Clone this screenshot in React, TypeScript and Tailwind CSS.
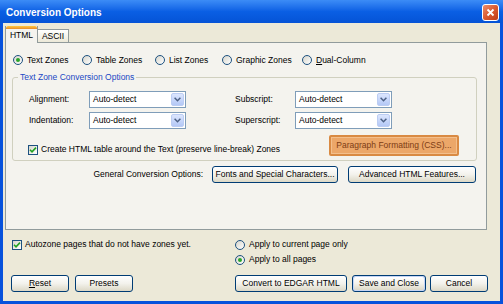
import React from 'react';

const Radio = ({ checked }: { checked?: boolean }) => (
  <span className="w-[10px] h-[10px] rounded-full border border-[#1c5180] bg-linear-to-br from-[#d6d5cc] to-white flex items-center justify-center shrink-0">
    {checked && <span className="w-[4px] h-[4px] rounded-full bg-[#2aa52a]" />}
  </span>
);

const Check = () => (
  <span className="w-[10px] h-[10px] border border-[#1c5180] bg-linear-to-br from-[#d6d5cc] to-white flex items-center justify-center shrink-0">
    <svg width="8" height="8" viewBox="0 0 8 8">
      <path d="M1 3.8 L3 5.8 L7 1.6" stroke="#21a121" strokeWidth="1.6" fill="none" />
    </svg>
  </span>
);

const Combo = () => (
  <div className="w-[97px] h-[17px] border border-[#7f9db9] bg-white flex items-center">
    <span className="flex-1 pl-[3px]">Auto-detect</span>
    <span className="w-[13px] h-[13px] mr-px bg-linear-to-b from-[#dce6fe] to-[#b4c8f6] border border-[#bccdf3] rounded-[2px] flex items-center justify-center">
      <svg width="7" height="5" viewBox="0 0 7 5">
        <path d="M0.6 0.8 L3.5 3.7 L6.4 0.8" stroke="#4d6185" strokeWidth="1.5" fill="none" />
      </svg>
    </span>
  </div>
);

const Btn = ({ children, className = '' }: { children: React.ReactNode; className?: string }) => (
  <button
    className={`h-[17px] shrink-0 whitespace-nowrap px-0 border border-[#003c74] rounded-[3px] bg-linear-to-b from-white via-[#f3f2ec] to-[#dcd8c6] text-[8.5px] leading-none text-black ${className}`}
  >
    {children}
  </button>
);

const RadioItem = ({ label, checked, w }: { label: React.ReactNode; checked?: boolean; w: string }) => (
  <div className={`flex items-center gap-[4px] ${w}`}>
    <Radio checked={checked} />
    <span>{label}</span>
  </div>
);

export default function App() {
  return (
    <div className="w-[503px] h-[304px] flex flex-col bg-[#0752dc] font-['Liberation_Sans',Arial,sans-serif] text-[8.5px] leading-[11px] text-black overflow-hidden whitespace-nowrap">
      {/* Title bar */}
      <div className="h-[23px] shrink-0 flex items-center bg-linear-to-b from-[#3c8cf6] via-[#0a5fe4] to-[#0553d6] pl-[6px] pr-[4px]">
        <span className="flex-1 pt-[2px] text-white font-bold text-[10px]">Conversion Options</span>
        <span className="w-[17px] h-[17px] mt-[2px] rounded-[3px] border border-white bg-linear-to-br from-[#ec8d6a] via-[#db5a30] to-[#bd3c18] flex items-center justify-center">
          <svg width="9" height="9" viewBox="0 0 9 9">
            <path d="M1.5 1.5 L7.5 7.5 M7.5 1.5 L1.5 7.5" stroke="white" strokeWidth="1.8" />
          </svg>
        </span>
      </div>

      {/* Body */}
      <div className="flex-1 mx-[3px] mb-[3px] bg-[#ece9d8] flex flex-col">
        {/* Tabs */}
        <div className="flex items-end mt-[4px] ml-[2px] h-[16px] -mb-px relative z-10">
          <div className="w-[33px] h-[17px] border-x border-[#919b9c] bg-[#f4f3ee] flex flex-col">
            <div className="h-[3px] bg-linear-to-b from-[#ffc83c] to-[#e68b2c] rounded-t-[2px]" />
            <div className="flex-1 flex items-center justify-center pb-[2px]">HTML</div>
          </div>
          <div className="w-[31px] h-[13px] mb-px border-t border-r border-[#919b9c] bg-linear-to-b from-white to-[#ece9d8] flex items-center justify-center">
            ASCII
          </div>
        </div>

        {/* Tab page */}
        <div className="ml-[2px] w-[482px] h-[188px] border border-[#919b9c] bg-[#f4f3ee] flex flex-col">
          <div className="flex items-center h-[12px] mt-[11px] pl-[7px]">
            <RadioItem checked label="Text Zones" w="w-[69px]" />
            <RadioItem label="Table Zones" w="w-[73px]" />
            <RadioItem label="List Zones" w="w-[67px]" />
            <RadioItem label="Graphic Zones" w="w-[80px]" />
            <RadioItem label={<><span className="underline">D</span>ual-Column</>} w="" />
          </div>

          {/* Group box */}
          <div className="relative mt-[11px] ml-[6px] w-[465px] h-[84px] border border-[#d0d0bf] rounded-[3px] flex flex-col">
            <span className="absolute -top-[6px] left-[5px] px-[2px] bg-[#f4f3ee] text-[#1a48c4]">
              Text Zone Conversion Options
            </span>
            <div className="flex items-center mt-[13px] pl-[16px]">
              <span className="w-[60px]">Alignment:</span>
              <Combo />
              <span className="w-[49px]" />
              <span className="w-[60px]">Subscript:</span>
              <Combo />
            </div>
            <div className="flex items-center mt-[4px] pl-[16px]">
              <span className="w-[60px]">Indentation:</span>
              <Combo />
              <span className="w-[49px]" />
              <span className="w-[60px]">Superscript:</span>
              <Combo />
            </div>
            <div className="flex items-start mt-[6px] pl-[15px] pr-[17px]">
              <div className="flex items-center gap-[3px] mt-[9px]">
                <Check />
                <span>Create HTML table around the Text (preserve line-break) Zones</span>
              </div>
              <button className="ml-auto w-[130px] h-[21px] p-0 border-2 border-[#d98a43] rounded-[2px] bg-[#eca769] text-[#7d3c14] text-[8.5px] leading-none">
                <span className="flex items-center justify-center h-full border border-[#f3bf8c]">
                  Paragraph Formatting (CSS)...
                </span>
              </button>
            </div>
          </div>

          <div className="flex items-center justify-end mt-[5px] pr-[10px]">
            <span>General Conversion Options:</span>
            <Btn className="ml-[9px] w-[126px]">Fonts and Special Characters...</Btn>
            <Btn className="ml-[10px] w-[128px]">Advanced HTML Features...</Btn>
          </div>
        </div>

        {/* Below tabs */}
        <div className="flex mt-[9px]">
          <div className="w-[232px] pl-[9px] flex items-start">
            <div className="flex items-center gap-[3px] h-[11px]">
              <Check />
              <span>Autozone pages that do not have zones yet.</span>
            </div>
          </div>
          <div className="flex flex-col gap-[4px]">
            <div className="flex items-center gap-[4px] h-[11px]">
              <Radio />
              <span>Apply to current page only</span>
            </div>
            <div className="flex items-center gap-[4px] h-[11px]">
              <Radio checked />
              <span>Apply to all pages</span>
            </div>
          </div>
        </div>

        <div className="flex items-center mt-[10px] pl-[8px]">
          <Btn className="w-[58px]">
            <span className="underline">R</span>eset
          </Btn>
          <Btn className="ml-[6px] w-[58px]">Presets</Btn>
          <Btn className="ml-[102px] w-[112px]">Convert to EDGAR HTML</Btn>
          <button className="ml-[5px] w-[74px] h-[17px] border border-[#003c74] rounded-[3px] bg-[#c5d5f5] p-px">
            <span className="flex items-center justify-center h-full rounded-[2px] bg-linear-to-b from-white via-[#f3f2ec] to-[#dcd8c6] text-[8.5px] leading-none">
              Save and Close
            </span>
          </button>
          <Btn className="ml-[4px] w-[58px]">Cancel</Btn>
        </div>
      </div>
    </div>
  );
}
